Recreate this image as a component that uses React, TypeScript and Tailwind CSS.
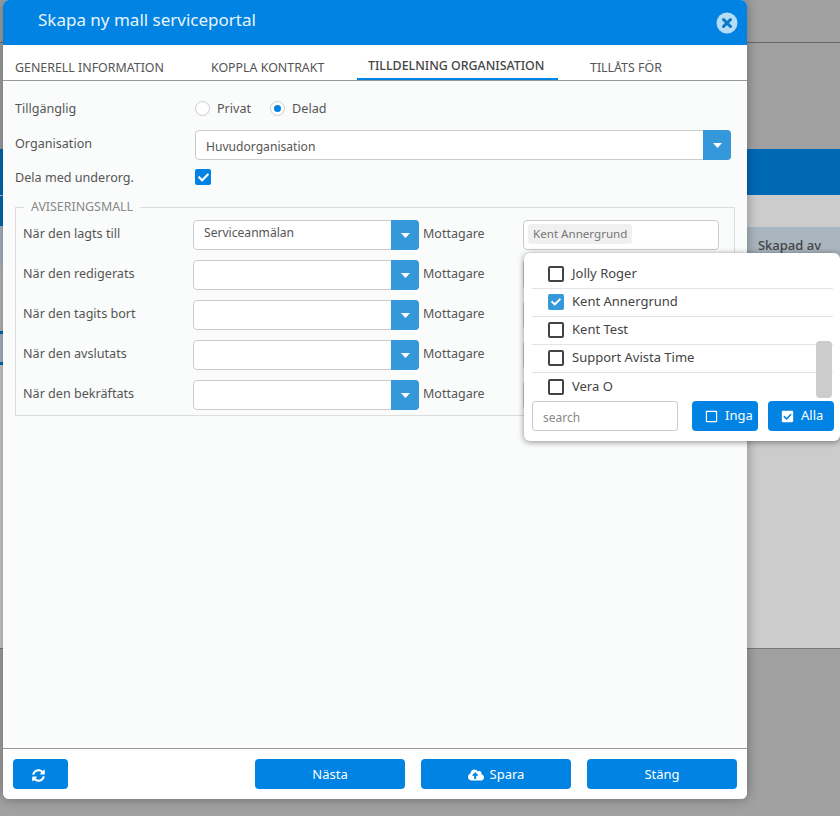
import { FaCheck, FaCheckSquare, FaCloudUploadAlt, FaRegSquare, FaSyncAlt } from 'react-icons/fa'

const rows = [
  { label: 'När den lagts till', value: 'Serviceanmälan', chip: 'Kent Annergrund' },
  { label: 'När den redigerats', value: '', chip: '' },
  { label: 'När den tagits bort', value: '', chip: '' },
  { label: 'När den avslutats', value: '', chip: '' },
  { label: 'När den bekräftats', value: '', chip: '' },
]

const people = [
  { name: 'Jolly Roger', checked: false },
  { name: 'Kent Annergrund', checked: true },
  { name: 'Kent Test', checked: false },
  { name: 'Support Avista Time', checked: false },
  { name: 'Vera O', checked: false },
]

function Caret() {
  return (
    <svg width="9" height="5" viewBox="0 0 9 5" className="fill-white">
      <path d="M0 0h9L4.5 5z" />
    </svg>
  )
}

function Select({ value, className, textClass }: { value: string; className: string; textClass: string }) {
  return (
    <div className={`flex h-[30px] rounded-[4px] border border-[#ccc] bg-white ${className}`}>
      <span className={`flex-1 truncate pl-[10px] text-[12.1px] text-[#555] ${textClass}`}>{value}</span>
      <span className="-my-px -mr-px flex w-[28px] items-center justify-center rounded-r-[4px] bg-[#3498db]">
        <Caret />
      </span>
    </div>
  )
}

function Tab({ label, active, className }: { label: string; active?: boolean; className: string }) {
  return (
    <div
      className={`absolute top-0 h-[35px] text-[12.4px] ${className} ${
        active
          ? 'border-b-2 border-[#0083e3] pt-[12px] font-medium leading-[17px] text-[#444]'
          : 'pt-[14px] leading-[17px] text-[#555]'
      }`}
    >
      {label}
    </div>
  )
}

function FooterButton({ children, className }: { children: React.ReactNode; className: string }) {
  return (
    <button
      type="button"
      className={`flex h-[30px] items-center justify-center gap-[6px] rounded-[4px] bg-[#0083e3] pt-[2px] text-[13px] text-white ${className}`}
    >
      {children}
    </button>
  )
}

export default function App() {
  return (
    <div className="relative h-[816px] w-[840px] overflow-hidden bg-[#a1a1a1] font-['Noto_Sans','Open_Sans',sans-serif]">
      {/* page behind the dimmed overlay */}
      <div className="h-[42px]" />
      <div className="h-px bg-[#666]" />
      <div className="h-[106px]" />
      <div className="flex h-[500px] border-b border-[#777]">
        <div className="flex w-[3px] flex-col">
          <div className="h-[46px] bg-[#0069b6]" />
          <div className="h-px bg-[#a9c5dc]" />
          <div className="h-[30px] bg-[#0069b6]" />
          <div className="h-[39px] bg-[#a9b5bf]" />
          <div className="h-[66px] bg-[#b8b8b8]" />
          <div className="h-[3px] bg-[#0069b6]" />
          <div className="h-[28px] bg-[#a9b5bf]" />
          <div className="h-[3px] bg-[#0069b6]" />
          <div className="flex-1 bg-[#ccc]" />
        </div>
        <div className="flex flex-1 flex-col bg-[#ccc]">
          <div className="h-[46px] bg-[#0069b6]" />
          <div className="h-[32px]" />
          <div className="flex h-[38px] justify-end bg-[#a9b5bf] pr-[19px] pt-[9px] text-[13px] font-medium text-[#444]">
            Skapad av
          </div>
        </div>
      </div>

      {/* modal */}
      <div className="absolute left-[3px] top-0 flex h-[799px] w-[744px] flex-col overflow-hidden rounded-[6px] bg-[#fafbfb] shadow-[0_0_12px_rgba(0,0,0,0.35)]">
        <div className="flex h-[45px] shrink-0 items-start justify-between bg-[#0083e3] pl-[35px] pr-[9px]">
          <span className="pt-[7px] text-[17px] leading-[26px] text-[#e8f4fd]">Skapa ny mall serviceportal</span>
          <svg width="22" height="22" viewBox="0 0 22 22" className="mt-[12px]">
            <circle cx="11" cy="11" r="10.5" fill="#b5dcf7" />
            <path d="M7.5 7.5l7 7M14.5 7.5l-7 7" stroke="#0a76c8" strokeWidth="3" strokeLinecap="round" />
          </svg>
        </div>

        <div className="relative h-[36px] shrink-0 border-b border-[#999] bg-white">
          <Tab label="GENERELL INFORMATION" className="left-[12px]" />
          <Tab label="KOPPLA KONTRAKT" className="left-[208px]" />
          <Tab label="TILLDELNING ORGANISATION" active className="left-[354px] w-[201px] pl-[11px]" />
          <Tab label="TILLÅTS FÖR" className="left-[587px]" />
        </div>

        <div className="flex-1 px-[12px] pt-[19px] text-[12.6px] text-[#555]">
          <div className="flex h-[16px] items-center">
            <span className="w-[180px] pt-[2px]">Tillgänglig</span>
            <span className="size-[15px] rounded-full border border-[#ccc] bg-white" />
            <span className="ml-[7px] pt-[2px]">Privat</span>
            <span className="ml-[19px] flex size-[15px] items-center justify-center rounded-full border border-[#ccc] bg-white">
              <span className="size-[7px] rounded-full bg-[#0083e3]" />
            </span>
            <span className="ml-[7px] pt-[2px]">Delad</span>
          </div>
          <div className="mt-[14px] flex">
            <span className="w-[180px] leading-[28px]">Organisation</span>
            <Select value="Huvudorganisation" className="w-[536px]" textClass="leading-[32px]" />
          </div>
          <div className="mt-[9px] flex h-[16px] items-center">
            <span className="w-[180px] pt-[2px]">Dela med underorg.</span>
            <span className="flex size-[16px] items-center justify-center rounded-[2px] bg-[#0083e3]">
              <FaCheck className="size-[11px] text-white" />
            </span>
          </div>

          <fieldset className="mt-[14px] w-[720px] border border-[#ddd] px-[7px] pb-[5px]">
            <legend className="ml-[1px] px-[7px] text-[12.4px] leading-[16px] text-[#888]">AVISERINGSMALL</legend>
            <div className="mt-[5px] flex flex-col gap-[10px]">
              {rows.map(row => (
                <div key={row.label} className="flex h-[30px]">
                  <span className="w-[170px] leading-[28px]">{row.label}</span>
                  <Select value={row.value} className="w-[226px]" textClass="leading-[24px]" />
                  <span className="ml-[4px] w-[100px] text-[12.5px] leading-[28px]">Mottagare</span>
                  <div className="flex w-[196px] items-start rounded-[4px] border border-[#ccc] bg-white px-[4px] pt-[3px]">
                    {row.chip && (
                      <span className="h-[20px] rounded-[3px] bg-[#f0f0f0] px-[5px] text-[11.6px] leading-[19px] text-[#777]">
                        {row.chip}
                      </span>
                    )}
                  </div>
                </div>
              ))}
            </div>
          </fieldset>
        </div>

        <div className="flex h-[51px] shrink-0 items-start border-t border-[#999] bg-white pl-[10px] pt-[10px]">
          <FooterButton className="w-[55px] pr-[4px]">
            <FaSyncAlt className="size-[13px]" />
          </FooterButton>
          <FooterButton className="ml-[187px] w-[150px]">Nästa</FooterButton>
          <FooterButton className="ml-[16px] w-[150px]">
            <FaCloudUploadAlt className="size-[16px]" />
            Spara
          </FooterButton>
          <FooterButton className="ml-[16px] w-[150px]">Stäng</FooterButton>
        </div>
      </div>

      {/* recipient dropdown */}
      <div className="absolute left-[524px] top-[253px] h-[188px] w-[316px] rounded-[6px] bg-white pl-[8px] pr-[7px] pt-[8px] text-[13px] text-[#444] shadow-[0_1px_6px_rgba(0,0,0,0.45)]">
        <div className="relative">
          {people.map((person, i) => (
            <div
              key={person.name}
              className={`flex h-[28px] items-center pl-[16px] pb-[1px] ${i < 4 ? 'border-b border-[#e4e4e4]' : ''}`}
            >
              {person.checked ? (
                <span className="flex size-[16px] items-center justify-center rounded-[2px] bg-[#3498db]">
                  <FaCheck className="size-[10px] text-white" />
                </span>
              ) : (
                <span className="size-[16px] rounded-[2px] border-2 border-[#444]" />
              )}
              <span className="ml-[8px]">{person.name}</span>
            </div>
          ))}
          <div className="absolute right-[1px] top-[80px] h-[57px] w-[16px] rounded-[4px] bg-[#ccc]" />
        </div>
        <div className="flex">
          <input
            placeholder="search"
            className="h-[30px] w-[146px] shrink-0 rounded-[3px] border border-[#ccc] px-[10px] pt-[2px] text-[12px] placeholder:text-[#888]"
          />
          <button
            type="button"
            className="ml-[14px] flex h-[30px] w-[66px] shrink-0 items-center gap-[7px] rounded-[4px] bg-[#0083e3] pl-[13px] text-white"
          >
            <FaRegSquare className="size-[13px]" />
            Inga
          </button>
          <button
            type="button"
            className="ml-[10px] flex h-[30px] w-[66px] shrink-0 items-center gap-[7px] rounded-[4px] bg-[#0083e3] pl-[13px] text-white"
          >
            <FaCheckSquare className="size-[13px]" />
            Alla
          </button>
        </div>
      </div>
    </div>
  )
}
